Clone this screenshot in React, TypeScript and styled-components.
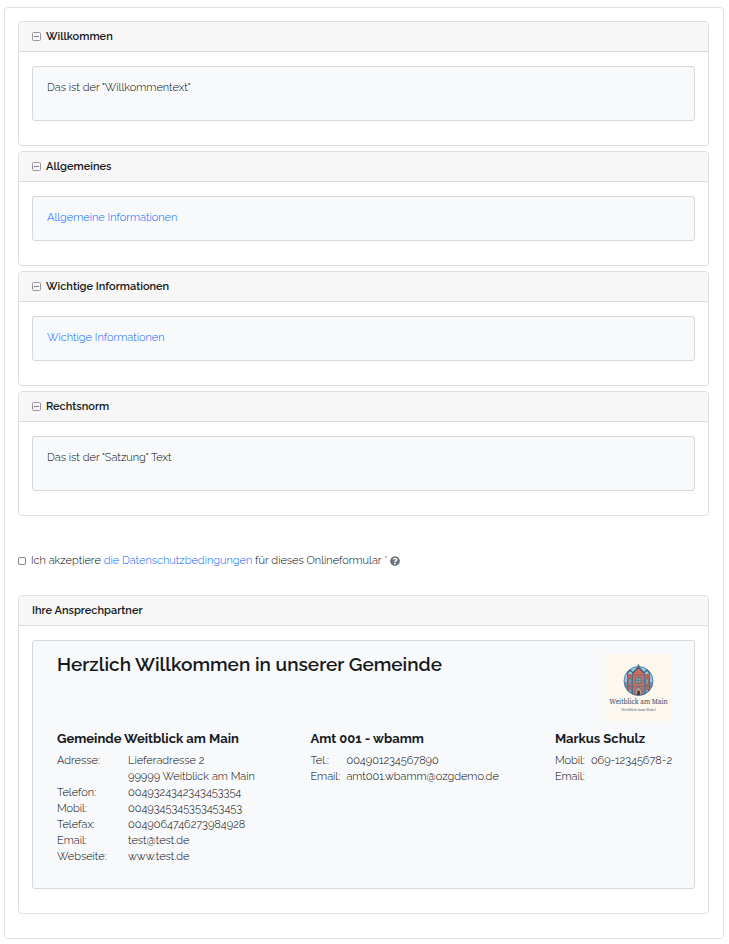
import React, { useState } from "react";
import styled, { createGlobalStyle } from "styled-components";
import { FaQuestionCircle } from "react-icons/fa";

const GlobalStyle = createGlobalStyle`
  *, *::before, *::after { box-sizing: border-box; }
  body {
    margin: 0;
    background: #fff;
    color: #000;
    font-family: Raleway, Lato, "Open Sans", sans-serif;
    font-size: 11px;
    font-weight: 300;
    line-height: 16px;
  }
  h1, h2, h3, p { margin: 0; }
`;

const Frame = styled.main`
  margin: 7px 5px 5px 4px;
  padding: 13px 14px 24px 13px;
  border: 1px solid #dee2e6;
  border-radius: 4px;
`;

const CardStack = styled.div`
  display: flex;
  flex-direction: column;
  gap: 5px;
`;

const Card = styled.section`
  border: 1px solid #dfdfe2;
  border-radius: 4px;
`;

const CardHeader = styled.h2`
  display: flex;
  align-items: center;
  height: 30px;
  padding: 0 13px;
  background: #f7f7f7;
  border-bottom: 1px solid #dadbdd;
  border-radius: 3px 3px 0 0;
  color: #16191c;
  font-size: 11px;
  font-weight: 600;
  line-height: 16px;
`;

const Toggle = styled.button`
  display: flex;
  align-items: center;
  gap: 4px;
  padding: 0;
  border: 0;
  background: none;
  color: inherit;
  font: inherit;
  cursor: pointer;
`;

const CardBody = styled.div`
  padding: 14px 13px 24px;
`;

const Well = styled.div<{ $roomy?: boolean }>`
  padding: ${(p) => (p.$roomy ? "13px 14px 24px" : "13px 14px 14px")};
  background: #f8f9fb;
  border: 1px solid #d6d9dc;
  border-radius: 3px;
`;

const Link = styled.a`
  color: #0062ff;
  text-decoration: none;
`;

const Consent = styled.div`
  display: flex;
  align-items: center;
  margin: 37px 0 26px;
`;

const CheckBox = styled.input`
  appearance: none;
  width: 8px;
  height: 8px;
  margin: 0 5px 0 0;
  border: 1px solid #858585;
  border-radius: 2px;
  background: #fff;
  &:checked { background: #087bff; }
`;

const Required = styled.span`
  color: #dc3545;
`;

const HelpButton = styled.button`
  display: flex;
  margin-left: 2px;
  padding: 0;
  border: 0;
  background: none;
  color: #6c757d;
  font-size: 10px;
`;

const ContactPanel = styled(Well)`
  padding: 13px 22px 23px 24px;
`;

const Banner = styled.div`
  display: flex;
  justify-content: space-between;
  margin-bottom: 9px;
`;

const Title = styled.h1`
  color: #16191c;
  font-size: 19px;
  font-weight: 600;
  line-height: 20px;
`;

const Contacts = styled.div`
  display: grid;
  grid-template-columns: 254fr 245fr 116fr;
`;

const ContactName = styled.h3`
  margin-bottom: 5px;
  color: #16191c;
  font-size: 13px;
  font-weight: 700;
  line-height: 18px;
  white-space: nowrap;
`;

const ContactTable = styled.table<{ $labelWidth: number }>`
  border-collapse: collapse;
  white-space: nowrap;
  th, td {
    height: 16px;
    padding: 0;
    text-align: left;
    font-weight: 300;
    vertical-align: top;
  }
  th { min-width: ${(p) => p.$labelWidth}px; }
`;

const MinusSquare = () => (
  <svg width="10" height="10" viewBox="0 0 10 10" fill="none" aria-hidden="true">
    <rect x="0.5" y="0.5" width="8" height="8" rx="1" stroke="#a0929b" />
    <path d="M2 4.500H7" stroke="#7b828c" />
  </svg>
);

const Logo = () => (
  <svg width="67" height="67" viewBox="0 0 67 67" role="img" aria-label="Weitblick am Main">
    <rect width="67" height="67" fill="#fcf8f0" />
    <clipPath id="disc"><circle cx="33.5" cy="27" r="14.5" /></clipPath>
    <circle cx="33.5" cy="27" r="14.5" fill="#8fc9e6" />
    <g clipPath="url(#disc)">
      <path d="M22 20h23v22H22z" fill="#b9685b" />
      <path d="M27 19l6.500-6 6.500 6v22H27z" fill="#c4705f" />
      <path d="M19 28h4v14h-4zM44 28h4v14h-4z" fill="#6e95ad" />
      <path d="M22 20l3-4 3 3 5.500-6 5.500 6 3-3 3 4" fill="none" stroke="#3b5b73" strokeWidth="1.200" />
      <path d="M27.500 20v21M39.500 20v21M22.500 20v21M44.500 20v21" stroke="#55708a" />
      <path d="M20 32.500h27" stroke="#55708a" strokeWidth=".8" />
      <path d="M28 21h11" stroke="#7b6670" strokeWidth=".8" />
      <path d="M24 25h2v5h-2zM41 25h2v5h-2zM24 35h2v4h-2zM41 35h2v4h-2z" fill="#76b9d6" stroke="#3d5870" strokeWidth=".4" />
      <circle cx="33.500" cy="26.500" r="3.200" fill="#8ba6b4" stroke="#4b6579" strokeWidth=".8" />
      <path d="M33.500 23.500v6M30.500 26.500h6" stroke="#4b6577" strokeWidth=".5" />
      <path d="M30 41v-5l3.500-3 3.500 3v5z" fill="#b79c93" stroke="#4b6579" strokeWidth=".8" />
      <path d="M32 41v-3a1.500 1.500 0 013 0v3z" fill="#513b3b" />
    </g>
    <circle cx="33.500" cy="27" r="14.500" fill="none" stroke="#4b6c84" strokeWidth=".8" />
    <path d="M33.500 10v5M32 12h3" stroke="#4b6c84" strokeWidth=".8" />
    <text x="33.500" y="50" textAnchor="middle" fontFamily="Noto Serif, DejaVu Serif, serif" fontSize="6.500" fontWeight="400" fill="#365064">Weitblick am Main</text>
    <text x="33.500" y="57" textAnchor="middle" fontFamily="Liberation Serif, serif" fontSize="4" fontWeight="400" fill="#526574">Weitblick trum Bobel</text>
  </svg>
);

type PanelProps = { title: string; roomy?: boolean; children: React.ReactNode };

const Panel = ({ title, roomy, children }: PanelProps) => {
  const [open, setOpen] = useState(true);
  return (
    <Card>
      <CardHeader>
        <Toggle type="button" aria-expanded={open} onClick={() => setOpen(!open)}>
          <MinusSquare />
          {title}
        </Toggle>
      </CardHeader>
      {open && <CardBody><Well $roomy={roomy}>{children}</Well></CardBody>}
    </Card>
  );
};

type ContactProps = { name: string; labelWidth: number; rows: [string, string][] };

const Contact = ({ name, labelWidth, rows }: ContactProps) => (
  <div>
    <ContactName>{name}</ContactName>
    <ContactTable $labelWidth={labelWidth}>
      <tbody>
        {rows.map(([label, value]) => (
          <tr key={label + value}>
            <th scope="row">{label}</th>
            <td>{value}</td>
          </tr>
        ))}
      </tbody>
    </ContactTable>
  </div>
);

export default function App() {
  return (
    <>
      <GlobalStyle />
      <Frame>
        <CardStack>
          <Panel title="Willkommen" roomy><p>Das ist der "Willkommentext"</p></Panel>
          <Panel title="Allgemeines"><p><Link href="#allgemein">Allgemeine Informationen</Link></p></Panel>
          <Panel title="Wichtige Informationen"><p><Link href="#wichtig">Wichtige Informationen</Link></p></Panel>
          <Panel title="Rechtsnorm" roomy><p>Das ist der "Satzung" Text</p></Panel>
        </CardStack>
        <Consent>
          <CheckBox type="checkbox" id="consent" required />
          <label htmlFor="consent">
            Ich akzeptiere <Link href="#datenschutz">die Datenschutzbedingungen</Link> für dieses Onlineformular <Required>*</Required>
          </label>
          <HelpButton type="button" aria-label="Hilfe"><FaQuestionCircle /></HelpButton>
        </Consent>
        <Card>
          <CardHeader>Ihre Ansprechpartner</CardHeader>
          <CardBody>
            <ContactPanel>
              <Banner>
                <Title>Herzlich Willkommen in unserer Gemeinde</Title>
                <Logo />
              </Banner>
              <Contacts>
                <Contact
                  name="Gemeinde Weitblick am Main"
                  labelWidth={71}
                  rows={[
                    ["Adresse:", "Lieferadresse 2"],
                    ["", "99999 Weitblick am Main"],
                    ["Telefon:", "0049324342343453354"],
                    ["Mobil:", "0049345345353453453"],
                    ["Telefax:", "0049064746273984928"],
                    ["Email:", "test@test.de"],
                    ["Webseite:", "www.test.de"],
                  ]}
                />
                <Contact
                  name="Amt 001 - wbamm"
                  labelWidth={36}
                  rows={[["Tel.:", "004901234567890"], ["Email:", "amt001.wbamm@ozgdemo.de"]]}
                />
                <Contact
                  name="Markus Schulz"
                  labelWidth={36}
                  rows={[["Mobil:", "069-12345678-2"], ["Email:", ""]]}
                />
              </Contacts>
            </ContactPanel>
          </CardBody>
        </Card>
      </Frame>
    </>
  );
}
